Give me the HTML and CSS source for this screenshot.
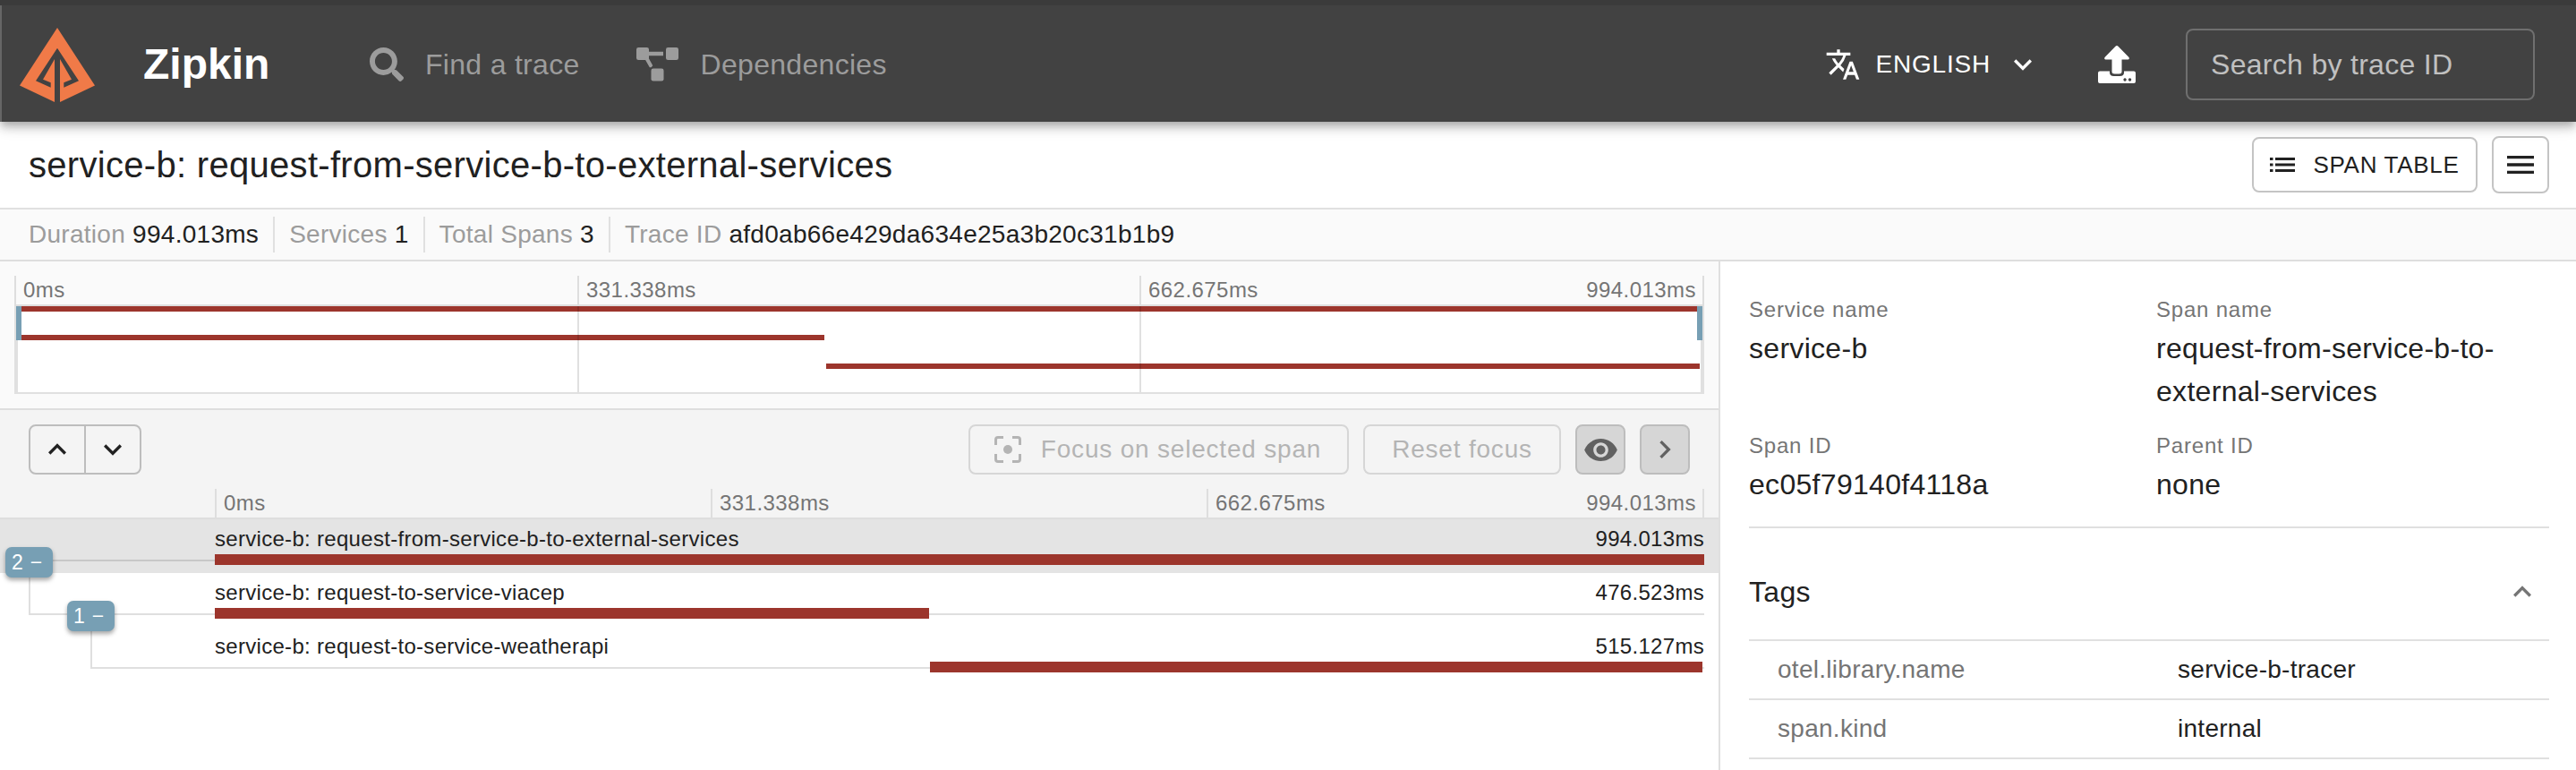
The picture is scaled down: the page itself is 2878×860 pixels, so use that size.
FILE: index.html
```
<!DOCTYPE html>
<html lang="en">
<head>
<meta charset="utf-8">
<title>Zipkin</title>
<link rel="stylesheet" href="styles.css">
</head>
<body>
<header class="appbar">
  <svg class="logo" viewBox="0 0 84 84"><path fill="#f07a48" d="M42 1 84 65.500 45 84V36L58 58.700 49.300 62.300V67.700L66 60.300 42 23.700 18 60.300 34.700 67.700V62.300L26 58.700 39 36V84L0 65.500Z"/></svg>
  <h1 class="brand">Zipkin</h1>
  <nav class="nav">
    <a class="nav-item"><svg class="ic-search" viewBox="0 0 512 512"><path fill="currentColor" d="M505 442.700 405.300 343c-4.500-4.500-10.600-7-17-7H372c27.600-35.300 44-79.700 44-128C416 93.100 322.900 0 208 0S0 93.100 0 208s93.100 208 208 208c48.300 0 92.700-16.400 128-44v16.300c0 6.400 2.500 12.500 7 17l99.700 99.700c9.400 9.400 24.600 9.400 33.900 0l28.300-28.300c9.400-9.400 9.400-24.600.1-34zM208 336c-70.700 0-128-57.200-128-128 0-70.700 57.200-128 128-128 70.700 0 128 57.200 128 128 0 70.700-57.200 128-128 128z"/></svg><span class="nav-text">Find a trace</span></a>
    <a class="nav-item"><svg class="ic-dep" viewBox="0 0 47 38"><g fill="currentColor"><rect width="14" height="14" rx="2.300"/><rect x="33" width="14" height="14" rx="2.300"/><rect x="16.500" y="23.500" width="14" height="14" rx="2.300"/><path d="M13 4.800H30V9.200H13zM9.500 13 13.200 11 18.300 20.200 16.500 22.300 14.800 22.300z"/></g></svg><span class="nav-text">Dependencies</span></a>
  </nav>
  <div class="lang">
    <svg class="ic-lang" viewBox="0 0 24 24"><path fill="currentColor" d="M12.870 15.070l-2.540-2.510.030-.030A17.520 17.520 0 0 0 14.070 6H17V4h-7V2H8v2H1v1.990h11.170C11.500 7.920 10.440 9.750 9 11.350 8.070 10.320 7.300 9.190 6.690 8h-2c.730 1.630 1.730 3.170 2.980 4.560l-5.090 5.020L4 19l5-5 3.110 3.110.760-2.040zM18.500 10h-2L12 22h2l1.120-3h4.750L21 22h2l-4.500-12zm-2.620 7l1.620-4.330L19.120 17h-3.240z"/></svg>
    <span class="lang-text">ENGLISH</span>
    <svg class="ic-more" viewBox="0 0 24 24"><path fill="currentColor" d="M16.590 8.590 12 13.170 7.410 8.590 6 10l6 6 6-6z"/></svg>
  </div>
  <svg class="ic-upload" viewBox="0 0 42 42"><path fill="#fff" d="M21 0Q21.800 0 22.500.8L34.500 13q1 2-1 2.500H26.500V29q0 2.500-3 2.500H18.500q-3 0-3-2.500V15.500H8.500Q6.500 15 7.500 13L19.500.8Q20.200 0 21 0Z"/><path fill="#fff" fill-rule="evenodd" d="M2 28.500H13V30q0 4 4.500 4H24.500q4.500 0 4.500-4V28.500H40q2 0 2 2V40q0 2-2 2H2q-2 0-2-2V30.500q0-2 2-2ZM30 36.300a1.700 1.700 0 1 0 .1 0ZM35.500 36.300a1.700 1.700 0 1 0 .1 0Z"/></svg>
  <div class="search"><span class="search-text">Search by trace ID</span></div>
</header>

<section class="titlebar">
  <h2 class="title">service-b: request-from-service-b-to-external-services</h2>
  <button class="btn btn-table"><svg class="ic-list" viewBox="0 0 28 18"><path fill="currentColor" d="M0 1h3.500v3H0zM6 1h22v3H6zM0 7.500h3.500v3H0zM6 7.500h22v3H6zM0 14h3.500v3H0zM6 14h22v3H6z"/></svg><span class="table-text">SPAN TABLE</span></button>
  <button class="btn btn-menu"><svg class="ic-menu" viewBox="0 0 30 20"><path fill="currentColor" d="M0 0h30v3.300H0zM0 8.350h30v3.300H0zM0 16.700h30V20H0z"/></svg></button>
</section>

<section class="stats">
  <div class="stat"><span class="key">Duration</span><span class="val">994.013ms</span></div>
  <div class="stat"><span class="key">Services</span><span class="val">1</span></div>
  <div class="stat"><span class="key">Total Spans</span><span class="val">3</span></div>
  <div class="stat"><span class="key">Trace ID</span><span class="val">afd0ab66e429da634e25a3b20c31b1b9</span></div>
</section>

<main class="main">
  <section class="trace">
    <div class="minimap">
      <div class="ticks">
        <div class="tick">0ms</div><div class="tick">331.338ms</div><div class="tick tick-last"><span>662.675ms</span><span>994.013ms</span></div>
      </div>
      <div class="map">
        <i class="mapbar full"></i><i class="mapbar first"></i><i class="mapbar second"></i>
        <i class="grid g1"></i><i class="grid g2"></i>
        <i class="handle left"></i><i class="handle right"></i>
      </div>
    </div>
    <div class="tools">
      <div class="toolrow">
        <div class="updown">
          <span class="half"><svg class="chev" viewBox="0 0 24 24"><path fill="currentColor" d="M12 8l-6 6 1.410 1.410L12 10.830l4.590 4.580L18 14z"/></svg></span>
          <span class="half"><svg class="chev" viewBox="0 0 24 24"><path fill="currentColor" d="M16.590 8.590 12 13.170 7.410 8.590 6 10l6 6 6-6z"/></svg></span>
        </div>
        <div class="tbtn focus"><svg class="ic-focus" viewBox="0 0 30 30"><path fill="none" stroke="currentColor" stroke-width="3" d="M1.500 10V4q0-2.500 2.500-2.500H10M20 1.500H26q2.500 0 2.500 2.500V10M28.500 20V26q0 2.500-2.500 2.500H20M10 28.500H4q-2.500 0-2.500-2.500V20"/><circle cx="15" cy="15" r="5" fill="currentColor"/></svg><span class="focus-text">Focus on selected span</span></div>
        <div class="tbtn reset"><span class="focus-text">Reset focus</span></div>
        <div class="tbtn sq"><svg class="ic-eye" viewBox="1 4.500 22 15"><path fill="currentColor" d="M12 4.500C7 4.500 2.730 7.610 1 12c1.730 4.390 6 7.500 11 7.500s9.270-3.110 11-7.500c-1.730-4.390-6-7.500-11-7.500zM12 17c-2.760 0-5-2.240-5-5s2.240-5 5-5 5 2.240 5 5-2.240 5-5 5zm0-8c-1.660 0-3 1.340-3 3s1.340 3 3 3 3-1.340 3-3-1.340-3-3-3z"/></svg></div>
        <div class="tbtn sq last"><svg class="chev-r" viewBox="0 0 24 24"><path fill="currentColor" d="M10 6 8.590 7.410 13.170 12l-4.580 4.590L10 18l6-6z"/></svg></div>
      </div>
      <div class="ticks ticks-main">
        <div class="tick">0ms</div><div class="tick">331.338ms</div><div class="tick tick-last"><span>662.675ms</span><span>994.013ms</span></div>
      </div>
    </div>
    <div class="rows">
      <div class="row selected"><div class="labels"><span>service-b: request-from-service-b-to-external-services</span><span class="dur">994.013ms</span></div><div class="rail r1"><i class="bar b1"></i></div></div>
      <div class="row"><div class="labels"><span>service-b: request-to-service-viacep</span><span class="dur">476.523ms</span></div><div class="rail r2"><i class="bar b2"></i></div></div>
      <div class="row"><div class="labels"><span>service-b: request-to-service-weatherapi</span><span class="dur">515.127ms</span></div><div class="rail r3"><i class="bar b3"></i></div></div>
      <i class="branch br1"></i><i class="branch br2"></i>
      <div class="badge bd1">2 −</div><div class="badge bd2">1 −</div>
    </div>
  </section>
  <aside class="detail">
    <div class="facts">
      <div class="fact"><div class="fk">Service name</div><div class="fv">service-b</div></div>
      <div class="fact"><div class="fk">Span name</div><div class="fv">request-from-service-b-to-<br>external-services</div></div>
      <div class="fact"><div class="fk">Span ID</div><div class="fv">ec05f79140f4118a</div></div>
      <div class="fact"><div class="fk">Parent ID</div><div class="fv">none</div></div>
    </div>
    <div class="tagshead"><span class="tags-text">Tags</span><svg class="ic-up" viewBox="0 0 24 24"><path fill="currentColor" d="M12 8l-6 6 1.410 1.410L12 10.830l4.590 4.580L18 14z"/></svg></div>
    <div class="tagrow"><span class="tk">otel.library.name</span><span class="tv">service-b-tracer</span></div>
    <div class="tagrow"><span class="tk">span.kind</span><span class="tv">internal</span></div>
  </aside>
</main>
</body>
</html>
```

FILE: styles.css
```
* { box-sizing: border-box; }
body { margin: 0; width: 2878px; height: 860px; overflow: hidden; background: #fff; color: #212121; font-family: "Liberation Sans", Arial, sans-serif; display: flex; flex-direction: column; }
svg { display: block; flex: none; }
span { white-space: nowrap; }
h1, h2 { margin: 0; }
button { font: inherit; color: inherit; background: none; padding: 0; margin: 0; }

.appbar { position: relative; z-index: 2; height: 136px; flex: none; display: flex; align-items: center; padding: 2px 46px 0 22px; background: linear-gradient(90deg, #666 2px, #424242 2px); border-top: 6px solid #3b3b3b; color: #fff; box-shadow: 0 4px 8px -2px rgba(0,0,0,.2), 0 8px 10px rgba(0,0,0,.14), 0 2px 20px rgba(0,0,0,.12); }
.logo { width: 84px; height: 84px; }
.brand { margin-left: 54px; width: 141px; font-size: 48px; line-height: 60px; font-weight: 700; }
.nav { display: flex; margin-left: 112px; color: #9c9c9c; }
.nav-item { display: flex; align-items: center; }
.nav-item + .nav-item { margin-left: 63px; }
.ic-search { width: 38px; height: 38px; margin-right: 24px; }
.ic-dep { width: 47px; height: 38px; margin-right: 25px; }
.nav-text { font-size: 32px; letter-spacing: .3px; }
.lang { display: flex; align-items: center; margin-left: auto; }
.ic-lang { width: 40px; height: 40px; margin-right: 16px; }
.lang-text { font-size: 28px; letter-spacing: .8px; }
.ic-more { width: 40px; height: 40px; margin-left: 16px; }
.ic-upload { width: 42px; height: 42px; margin: 0 56px 0 64px; }
.search { width: 390px; height: 80px; border: 2px solid #6f6f6f; border-radius: 8px; padding-left: 26px; display: flex; align-items: center; color: #c0c0c0; }
.search-text { font-size: 32px; letter-spacing: .3px; }

.titlebar { height: 98px; flex: none; border-bottom: 2px solid #e0e0e0; display: flex; align-items: center; padding: 0 30px 0 32px; }
.title { font-size: 40px; font-weight: 400; letter-spacing: .3px; white-space: nowrap; }
.btn { border: 2px solid #c4c4c4; border-radius: 8px; display: flex; align-items: center; justify-content: center; }
.btn-table { width: 252px; height: 62px; margin-left: auto; margin-right: 16px; }
.btn-menu { width: 64px; height: 64px; }
.ic-list { width: 28px; height: 18px; margin-right: 20px; }
.ic-menu { width: 30px; height: 20px; }
.table-text { font-size: 26px; letter-spacing: .7px; }

.stats { height: 58px; flex: none; background: #fafafa; border-bottom: 2px solid #dedede; display: flex; align-items: center; padding-left: 32px; font-size: 28px; letter-spacing: .28px; }
.stat { display: flex; gap: 8px; height: 40px; align-items: center; padding-right: 16px; margin-right: 16px; border-right: 2px solid #e0e0e0; }
.stat:last-child { border: 0; }
.key { color: #9c9c9c; }

.main { flex: 1; display: flex; min-height: 0; }
.trace { width: 1922px; flex: none; border-right: 2px solid #e0e0e0; }
.minimap { height: 166px; background: #fafafa; border-bottom: 2px solid #dedede; padding: 16px 16px 0; }
.ticks { height: 34px; display: grid; grid-template-columns: 629px 628px 1fr; font-size: 24px; letter-spacing: .45px; color: #757575; border-bottom: 2px solid #dedede; }
.tick { border-left: 2px solid #dedede; padding-left: 8px; line-height: 32px; }
.tick-last { display: flex; justify-content: space-between; border-right: 2px solid #dedede; padding-right: 7px; }
.map { position: relative; height: 98px; background: #fff; border: solid #e0e0e0; border-width: 0 4px 2px; }
.mapbar { position: absolute; height: 6px; background: #9c352c; }
.full { left: 0; right: 0; top: 0; }
.first { left: 0; width: 901px; top: 32px; }
.second { left: 903px; right: 1px; top: 64px; }
.grid { position: absolute; width: 2px; top: 0; bottom: 0; background: rgba(0,0,0,.12); }
.g1 { left: 625px; }
.g2 { left: 1253px; }
.handle { position: absolute; width: 6px; height: 38px; top: 0; background: #779fb4; }
.left { left: -2px; }
.right { right: -2px; }
.tools { height: 122px; background: #f4f4f4; padding-top: 16px; }
.toolrow { height: 56px; display: flex; padding: 0 32px; }
.updown { width: 126px; display: flex; border: 2px solid #bdbdbd; border-radius: 8px; margin-right: auto; }
.half { flex: 1; display: flex; align-items: center; justify-content: center; }
.half + .half { border-left: 2px solid #bdbdbd; }
.chev { width: 40px; height: 40px; }
.tbtn { height: 56px; border: 2px solid #d6d6d6; border-radius: 8px; display: flex; align-items: center; justify-content: center; color: #b4b4b4; margin-left: 16px; }
.focus { width: 425px; padding-right: 2px; }
.reset { width: 221px; }
.ic-focus { width: 30px; height: 30px; margin-right: 22px; }
.focus-text { font-size: 28px; letter-spacing: .8px; }
.sq { width: 56px; background: #d6d6d6; border-color: #bdbdbd; color: #616161; }
.ic-eye { width: 37px; height: 25px; }
.chev-r { width: 40px; height: 40px; }
.ticks-main { margin-top: 16px; padding: 0 16px 0 240px; grid-template-columns: 554px 554px 1fr; }
.rows { position: relative; }
.row { height: 60px; padding-right: 16px; }
.selected { background: #e4e4e4; }
.labels { height: 39px; padding-left: 240px; display: flex; justify-content: space-between; font-size: 24px; line-height: 44px; letter-spacing: .3px; }
.rail { height: 12px; display: flex; background: linear-gradient(#dfdfdf, #dfdfdf) 0 6px / 100% 2px no-repeat; }
.r1 { margin-left: 32px; padding-left: 208px; background-image: linear-gradient(#c8c8c8, #c8c8c8); }
.r2 { margin-left: 32px; padding-left: 208px; }
.r3 { margin-left: 101px; padding-left: 938px; }
.bar { background: #9c352c; height: 12px; }
.b1 { width: 1664px; }
.b2 { width: 798px; }
.b3 { width: 863px; }
.branch { position: absolute; width: 2px; background: #dfdfdf; }
.br1 { left: 32px; top: 60px; height: 47px; }
.br2 { left: 101px; top: 120px; height: 47px; }
.badge { position: absolute; width: 53px; height: 34px; border-radius: 7px; background: #779fb4; color: #fff; font-size: 23px; line-height: 34px; padding-left: 7px; letter-spacing: .8px; white-space: nowrap; box-shadow: 0 3px 5px rgba(0,0,0,.35); }
.bd1 { left: 6px; top: 31px; }
.bd2 { left: 75px; top: 91px; }

.detail { flex: 1; padding: 32px 30px 0 32px; }
.facts { height: 266px; border-bottom: 2px solid #e0e0e0; display: grid; grid-template-columns: 455px 1fr; grid-template-rows: 152px 1fr; }
.fk { font-size: 24px; line-height: 44px; letter-spacing: .8px; color: #757575; }
.fv { font-size: 32px; line-height: 48px; letter-spacing: .3px; margin-top: -3px; }
.tagshead { height: 126px; border-bottom: 2px solid #e0e0e0; display: flex; align-items: center; justify-content: space-between; padding: 18px 10px 0 0; }
.tags-text { font-size: 32px; letter-spacing: .3px; }
.ic-up { width: 40px; height: 40px; color: #757575; }
.tagrow { height: 66px; border-bottom: 2px solid #e0e0e0; display: grid; grid-template-columns: 447px 1fr; align-items: center; padding-left: 32px; font-size: 28px; letter-spacing: .28px; }
.tk { color: #757575; }
```
